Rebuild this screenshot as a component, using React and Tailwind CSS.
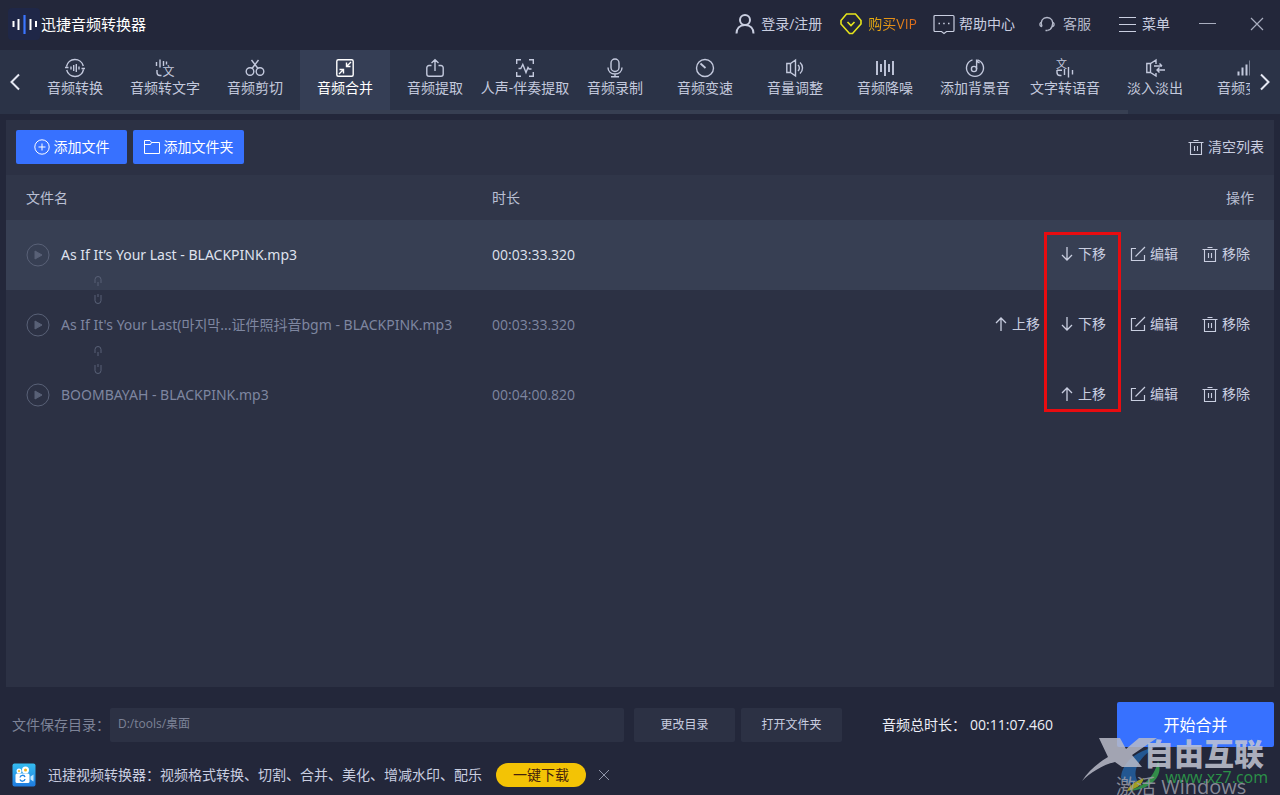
import { useState } from "react";
import clsx from "clsx";

const tabs = [
  { label: "音频转换", icon: ConvertIcon },
  { label: "音频转文字", icon: SpeechToTextIcon },
  { label: "音频剪切", icon: CutIcon },
  { label: "音频合并", icon: MergeIcon },
  { label: "音频提取", icon: ExtractIcon },
  { label: "人声-伴奏提取", icon: VocalIcon },
  { label: "音频录制", icon: MicIcon },
  { label: "音频变速", icon: SpeedIcon },
  { label: "音量调整", icon: VolumeIcon },
  { label: "音频降噪", icon: DenoiseIcon },
  { label: "添加背景音", icon: MusicIcon },
  { label: "文字转语音", icon: TextToSpeechIcon },
  { label: "淡入淡出", icon: FadeIcon },
  { label: "音频变调", icon: PitchIcon },
];

const files = [
  { name: "As If It’s Your Last - BLACKPINK.mp3", duration: "00:03:33.320", moves: ["down"] },
  { name: "As If It's Your Last(마지막...证件照抖音bgm - BLACKPINK.mp3", duration: "00:03:33.320", moves: ["up", "down"] },
  { name: "BOOMBAYAH - BLACKPINK.mp3", duration: "00:04:00.820", moves: ["up"] },
];

export default function App() {
  const [tab, setTab] = useState(3);
  const [selected, setSelected] = useState(0);
  const [dir, setDir] = useState("D:/tools/桌面");

  return (
    <div className="relative flex min-h-screen flex-col overflow-hidden bg-[#23273a] font-['Open_Sans','Noto_Sans_CJK_SC',sans-serif] text-sm leading-5 text-[#c9cee0]">
      <Header />

      {/* Tool tabs */}
      <nav className="flex h-16 bg-[#2b3347]">
        <button aria-label="上一页" className="flex w-[30px] shrink-0 items-center justify-center text-[#e4e7f2]">
          <Svg className="h-5 w-5" strokeWidth="2"><path d="M14 2.5 6.5 10l7.5 7.5" /></Svg>
        </button>
        <div className="min-w-0 flex-1 overflow-hidden">
          <div className="flex">
            {tabs.map(({ label, icon: Icon }, i) => (
              <button
                key={label}
                onClick={() => setTab(i)}
                className={clsx(
                  "flex h-[60px] w-[90px] shrink-0 flex-col items-center pt-2 whitespace-nowrap",
                  i === tab ? "bg-[#353e55] text-white" : "text-[#c3c9dd]"
                )}
              >
                <Icon />
                <span>{label}</span>
              </button>
            ))}
          </div>
          <div className="h-1 w-[90%] bg-[#373f52]" />
        </div>
        <button aria-label="下一页" className="flex w-[30px] shrink-0 items-center justify-center text-[#e4e7f2]">
          <Svg className="h-5 w-5" strokeWidth="2"><path d="m6 2.5 7.5 7.5L6 17.5" /></Svg>
        </button>
      </nav>

      {/* File list */}
      <main className="relative mx-1.5 mt-1.5 flex-1 bg-[#2c3144]">
        <div className="flex h-[55px] items-start gap-1.5 px-2.5 pt-2.5">
          <button className="flex h-[34px] w-[111px] items-center justify-center gap-1 rounded-xs bg-[#3771ff] text-white">
            <Svg className="h-4 w-4" viewBox="0 0 16 16" strokeWidth="1">
              <circle cx="8" cy="8" r="7.2" />
              <path d="M8 4.5v7M4.5 8h7" />
            </Svg>
            添加文件
          </button>
          <button className="flex h-[34px] w-[111px] items-center justify-center gap-1 rounded-xs bg-[#3771ff] text-white">
            <Svg className="h-4 w-4" viewBox="0 0 16 16" strokeWidth="1">
              <path d="M.5 14.5v-13h5.500l1.500 2h8v11zM.5 5.500h6l1-2" />
            </Svg>
            添加文件夹
          </button>
          <button className="ml-auto flex h-[34px] items-center gap-1">
            <TrashIcon />
            清空列表
          </button>
        </div>

        <table className="w-full table-fixed text-left">
          <thead>
            <tr className="h-[45px] bg-[#303649] text-[#b9bfd2]">
              <th className="w-[466px] pl-5 font-normal">文件名</th>
              <th className="w-[200px] pl-5 font-normal">时长</th>
              <th className="pr-5 text-right font-normal">操作</th>
            </tr>
          </thead>
          <tbody>
            {files.map((file, i) => (
              <tr
                key={file.name}
                onClick={() => setSelected(i)}
                className={clsx("h-[70px]", i === selected ? "bg-[#373f53] text-[#dfe2ee]" : "text-[#7e86a0]")}
              >
                <td className="relative pl-5 font-['Noto_Sans','Noto_Sans_CJK_SC',sans-serif]">
                  <div className="flex items-center gap-[11px] whitespace-nowrap">
                    <button aria-label="播放" className="text-[#596177]">
                      <Svg className="h-6 w-6" viewBox="0 0 24 24" strokeWidth="1">
                        <circle cx="12" cy="12" r="11" />
                        <path d="M9 8v8l7-4z" fill="currentColor" />
                      </Svg>
                    </button>
                    {file.name}
                  </div>
                  {i < files.length - 1 && <ChainMark />}
                </td>
                <td className="pl-5">{file.duration}</td>
                <td className="pr-6 pb-0.5 text-[#c9cee0]">
                  <div className="flex justify-end gap-6">
                    <div className="flex gap-5">
                      {file.moves.map((dir) => <MoveButton key={dir} dir={dir} />)}
                    </div>
                    <button className="flex items-center gap-1">
                      <Svg className="h-4 w-4" viewBox="0 0 16 16" strokeWidth="1.2">
                        <path d="M6 2.500H1.500v12h13V9M5.500 10.500 15 1" />
                      </Svg>
                      编辑
                    </button>
                    <button className="flex items-center gap-1">
                      <TrashIcon />
                      移除
                    </button>
                  </div>
                </td>
              </tr>
            ))}
          </tbody>
        </table>

        {/* Highlight round the move buttons */}
        <div className="pointer-events-none absolute top-28 right-[153px] h-[180px] w-[77px] border-3 border-[#e80c10]" />
      </main>

      <footer className="pt-[15px] pb-2">
        <div className="flex items-center pr-1.5 pl-3">
          <label htmlFor="dir" className="text-[#7d8397]">文件保存目录：</label>
          <input
            id="dir"
            value={dir}
            onChange={(e) => setDir(e.target.value)}
            className="h-[34px] min-w-0 flex-1 rounded-xs bg-[#2c3144] px-2 pb-1 text-xs text-[#7d8397] outline-none"
          />
          <button className="ml-2.5 h-[34px] w-[101px] rounded-xs bg-[#2c3144] text-xs">更改目录</button>
          <button className="ml-1.5 h-[34px] w-[101px] rounded-xs bg-[#2c3144] text-xs">打开文件夹</button>
          <div className="ml-10 flex w-[235px] gap-1 text-[#eceef6]">
            <span>音频总时长：</span>
            <span>00:11:07.460</span>
          </div>
          <button className="h-[45px] w-[157px] rounded-xs bg-[#3771ff] text-base text-white">开始合并</button>
        </div>

        <div className="mt-4 flex h-6 items-center pl-3">
          <PromoIcon />
          <p className="ml-3">迅捷视频转换器：视频格式转换、切割、合并、美化、增减水印、配乐</p>
          <button className="ml-3.5 h-6 w-[90px] rounded-full bg-[#f3c305] text-[#45210c]">一键下载</button>
          <button aria-label="关闭推广" className="ml-3 text-[#8e94a8]">
            <Svg className="h-3 w-3" viewBox="0 0 12 12" strokeWidth="1"><path d="m1 1 10 10M11 1 1 11" /></Svg>
          </button>
        </div>
      </footer>

      <Watermark />
    </div>
  );
}

function Header() {
  return (
    <header className="flex h-[50px] items-center pr-4 pb-0.5 pl-2">
      <svg className="h-8 w-8" viewBox="0 0 32 32" aria-hidden="true">
        <rect width="32" height="32" rx="4" fill="#1f2747" />
        <path d="M5.500 13v6M10.500 11v11M22.500 11v11M28 13v6" stroke="#fff" strokeWidth="2" />
        <path d="M16.500 7v19" stroke="#3b76ff" strokeWidth="2.200" />
      </svg>
      <h1 className="ml-px text-[15px] text-white">迅捷音频转换器</h1>

      <button className="ml-auto flex items-center gap-1.5">
        <Svg className="h-5 w-5" strokeWidth="2">
          <circle cx="10" cy="6" r="5" />
          <path d="M1.500 19.500c0-5 3-8.500 8.500-8.500s8.500 3.500 8.500 8.500" />
        </Svg>
        登录/注册
      </button>
      <button className="ml-[18px] flex items-center gap-1.5">
        <Svg className="h-[22px] w-[22px] text-[#e6e41c]" viewBox="0 0 22 22" strokeWidth="1.6">
          <path d="M6.500 1h9L21 7.500V11l-8.500 9.500h-3L1 11V7.500zM7.500 9l3.500 3.500L14.500 9" />
        </Svg>
        <span className="bg-linear-to-r from-[#e5b20c] to-[#e0681c] bg-clip-text text-transparent">购买VIP</span>
      </button>
      <button className="ml-4 flex items-center gap-1">
        <Svg className="h-[22px] w-[22px]" viewBox="0 0 22 22" strokeWidth="1.2">
          <path d="M2 2.500h18a1 1 0 0 1 1 1v14a1 1 0 0 1-1 1h-6.500l-2.500 2-2.500-2H2a1 1 0 0 1-1-1v-14a1 1 0 0 1 1-1z" />
          <path d="M5.500 10.500h1.500M10.200 10.500h1.500M15 10.500h1.500" strokeWidth="1.600" />
        </Svg>
        帮助中心
      </button>
      <button className="ml-6 flex items-center gap-2 text-[#b4b9ca]">
        <Svg className="h-4 w-4" viewBox="0 0 16 16" strokeWidth="1.300">
          <path d="M3 10.500C1 4.500 4 1.500 8 1.500s7 3 5 9c-.6 2-2 3.500-4.500 3.800" />
          <path d="M2.500 6.500C.3 6.500.3 10.500 3 10.500M13.500 6.500c2.200 0 2.200 4-.5 4M6.500 14.500h2" />
        </Svg>
        客服
      </button>
      <button className="ml-7 flex items-center gap-1.5">
        <Svg className="h-[17px] w-[17px]" viewBox="0 0 17 17" strokeWidth="1"><path d="M0 1.500h17M0 8.500h17M0 15.500h17" /></Svg>
        菜单
      </button>
      <button aria-label="最小化" className="ml-7 text-[#a9aebf]">
        <Svg className="h-[18px] w-[18px]" viewBox="0 0 18 18" strokeWidth="1"><path d="M1 8.500h17" /></Svg>
      </button>
      <button aria-label="关闭" className="ml-[34px] text-[#a9aebf]">
        <Svg className="h-3.5 w-3.5" viewBox="0 0 14 14" strokeWidth="1.200"><path d="m1 1 12 12M13 1 1 13" /></Svg>
      </button>
    </header>
  );
}

function MoveButton({ dir }) {
  return (
    <button className="flex items-center gap-1">
      <Svg className="h-3.5 w-3.5" viewBox="0 0 14 14" strokeWidth="1.300">
        {dir === "up" ? <path d="M7 14V1M2 6l5-5 5 5" /> : <path d="M7 0v13M2 8l5 5 5-5" />}
      </Svg>
      {dir === "up" ? "上移" : "下移"}
    </button>
  );
}

// Broken chain link that straddles two neighbouring rows
function ChainMark() {
  return (
    <Svg className="absolute -bottom-4 left-[88px] z-10 h-8 w-2 text-[#596177]" viewBox="0 0 8 32" strokeWidth="1">
      <path d="M1 9V5.500a3 3 0 0 1 6 0V9M4 8v4M1 21v5.500a3 3 0 0 0 6 0V21M4 20v3" />
    </Svg>
  );
}

function Svg({ className = "h-5 w-5", viewBox = "0 0 20 20", strokeWidth = "1.4", children }) {
  return (
    <svg
      className={clsx("shrink-0 overflow-visible", className)}
      viewBox={viewBox}
      fill="none"
      stroke="currentColor"
      strokeWidth={strokeWidth}
      aria-hidden="true"
    >
      {children}
    </svg>
  );
}

function TrashIcon() {
  return (
    <Svg className="h-4 w-4" viewBox="0 0 16 16" strokeWidth="1.1">
      <path d="M.5 3.500h15M5.500 1.500h5M2.500 3.500v12h11v-12M6.500 7v5M9.500 7v5" />
    </Svg>
  );
}

function ConvertIcon() {
  return (
    <Svg>
      <path d="M1.500 8.500a8.600 8.600 0 0 1 16.800-.5M18.500 11.500a8.600 8.600 0 0 1-16.800.5M0 9.500h3.500M16.500 10.500H20" />
      <path d="M6 8.500v3M8.700 7v6M11.300 6v8M14 8.500v3" />
    </Svg>
  );
}

function SpeechToTextIcon() {
  return (
    <Svg>
      <path d="M1.500 4v4M5 1.500v8M8.500 3v5M2 12v2.500a3 3 0 0 0 3 3h1.500M11.500 3.500v3" />
      <text x="7.500" y="18" fontSize="12" fill="currentColor" stroke="none">文</text>
    </Svg>
  );
}

function CutIcon() {
  return (
    <Svg>
      <circle cx="5" cy="13.500" r="3.800" />
      <circle cx="15" cy="13.500" r="3.800" />
      <path d="M6.500 2 13 10.500M13.500 2 7 10.500" />
    </Svg>
  );
}

function MergeIcon() {
  return (
    <Svg>
      <rect x="1.800" y="1.800" width="16.400" height="16.400" rx="1.500" />
      <path d="m16 4-4.500 4.500M11.500 4.500v4h4M4 16l4.500-4.500M4.500 11.500h4v4" />
    </Svg>
  );
}

function ExtractIcon() {
  return (
    <Svg>
      <path d="M6.500 7.500H4A2.200 2.200 0 0 0 1.800 9.700V16A2.200 2.200 0 0 0 4 18.200h12a2.200 2.200 0 0 0 2.200-2.200V9.700A2.200 2.200 0 0 0 16 7.500h-2.500M10 13V2M6.500 5 10 1.800 13.500 5" />
    </Svg>
  );
}

function VocalIcon() {
  return (
    <Svg>
      <path d="M1.700 6V1.700H6M14 1.700h4.300V6M18.300 14v4.300H14M6 18.300H1.700V14" />
      <path d="M3.500 10.500h2.300l2-4 3.200 8 2-5 1 1.500h2.500" />
    </Svg>
  );
}

function MicIcon() {
  return (
    <Svg>
      <rect x="6" y="1" width="8" height="12.500" rx="4" />
      <path d="M3 9.500c0 4 3 6.500 7 6.500s7-2.500 7-6.500M10 16v2.500M6 18.700h8" />
    </Svg>
  );
}

function SpeedIcon() {
  return (
    <Svg>
      <circle cx="10" cy="10" r="8.500" />
      <path d="m5.500 5.500 5 4.500" strokeWidth="1.800" />
    </Svg>
  );
}

function VolumeIcon() {
  return (
    <Svg>
      <path d="M5.500 5.500H1.800v9h3.700l5 3.500V2zM5.500 5.500v9M13 7a4 4 0 0 1 0 6M15 4.500a7.300 7.300 0 0 1 0 11" />
    </Svg>
  );
}

function DenoiseIcon() {
  return (
    <Svg strokeWidth="1.900">
      <path d="M2 3v14M6 6v8M10 2v16M14 6v8M18 3v14" />
    </Svg>
  );
}

function MusicIcon() {
  return (
    <Svg>
      <path d="M7.500 1.800a8.500 8.500 0 1 0 5 0" />
      <circle cx="9" cy="11" r="2.600" />
      <path d="M11.600 11V1.500c.3 2 1.400 3 3 3.300" />
    </Svg>
  );
}

function TextToSpeechIcon() {
  return (
    <Svg>
      <text x="1" y="10" fontSize="11" fill="currentColor" stroke="none">文</text>
      <path d="M2 12v2.500a3 3 0 0 0 3 3h1.500M9.500 11v6M13.500 9v10.500M17.500 12v4.500M2 12.200h5" />
    </Svg>
  );
}

function FadeIcon() {
  return (
    <Svg>
      <path d="M11 6V2L5.500 5.500H1.800v9h3.700L11 18v-3M5.500 5.500v9M9 8h8M14.500 5.500 17 8M20 12h-8M14.500 9.500 12 12l2.500 2.500" />
    </Svg>
  );
}

function PitchIcon() {
  return (
    <Svg strokeWidth="2">
      <path d="M3.500 13.500v4M7.500 9.500v8M11.500 6.500v11M15.500 2.500v15" />
    </Svg>
  );
}

function PromoIcon() {
  return (
    <svg className="h-6 w-6 shrink-0" viewBox="0 0 24 24" aria-hidden="true">
      <defs>
        <linearGradient id="promo" x2="0" y2="1">
          <stop stopColor="#35bdf0" />
          <stop offset="1" stopColor="#1e7be0" />
        </linearGradient>
      </defs>
      <rect x=".5" y=".5" width="23" height="23" rx="2" fill="url(#promo)" />
      <circle cx="7" cy="8" r="2.500" fill="#fff" />
      <circle cx="13.500" cy="7" r="3.500" fill="#fff" />
      <circle cx="7" cy="8" r="1" fill="#f1b41c" />
      <circle cx="13.500" cy="7" r="1.500" fill="#f1b41c" />
      <rect x="3.500" y="10.500" width="14" height="9.500" rx="1.500" fill="#fff" />
      <path d="m18.500 13.500 3-2v7l-3-2z" fill="#bfe6ff" />
      <path d="M8 14.500a2.600 2.600 0 0 1 5-.5M13 16a2.600 2.600 0 0 1-5 .5" fill="none" stroke="#2388e6" strokeWidth="1.400" />
    </svg>
  );
}

function Watermark() {
  return (
    <div className="pointer-events-none absolute right-0 bottom-0 h-[60px] w-[200px] overflow-hidden whitespace-nowrap">
      <svg className="absolute inset-0 h-full w-full" viewBox="0 0 200 60" aria-hidden="true">
        <path d="M75 12C56 16 42 28 41 42c1 6 8 7 17 5-7-11 1-24 17-35z" fill="#2364a8" opacity=".8" />
        <path d="M78 26c6 14-6 29-30 30 14-4 26-12 30-30z" fill="#35a04c" opacity=".85" />
        <path d="M64 43c-2 7-8 11-17 13 1-4 8-10 17-13z" fill="#b9b51f" opacity=".85" />
        <path d="M19 3h21l6 11L59 3h18L52 20l10 12H42l-7-5C22 30 10 38 2 46c6-10 16-18 26-24z" fill="#b9bbc8" opacity=".85" />
      </svg>
      <span className="absolute top-8 right-3 text-base leading-5 text-[#2b9148]">www.xz7.com</span>
      <span className="absolute top-[3px] left-16 text-[30px] leading-8 font-black text-[#c3c6d4]/85">自由互联</span>
      <span className="absolute top-[38px] left-9 text-xl leading-7 text-[#9a9ca8]/85">激活 Windows</span>
    </div>
  );
}
